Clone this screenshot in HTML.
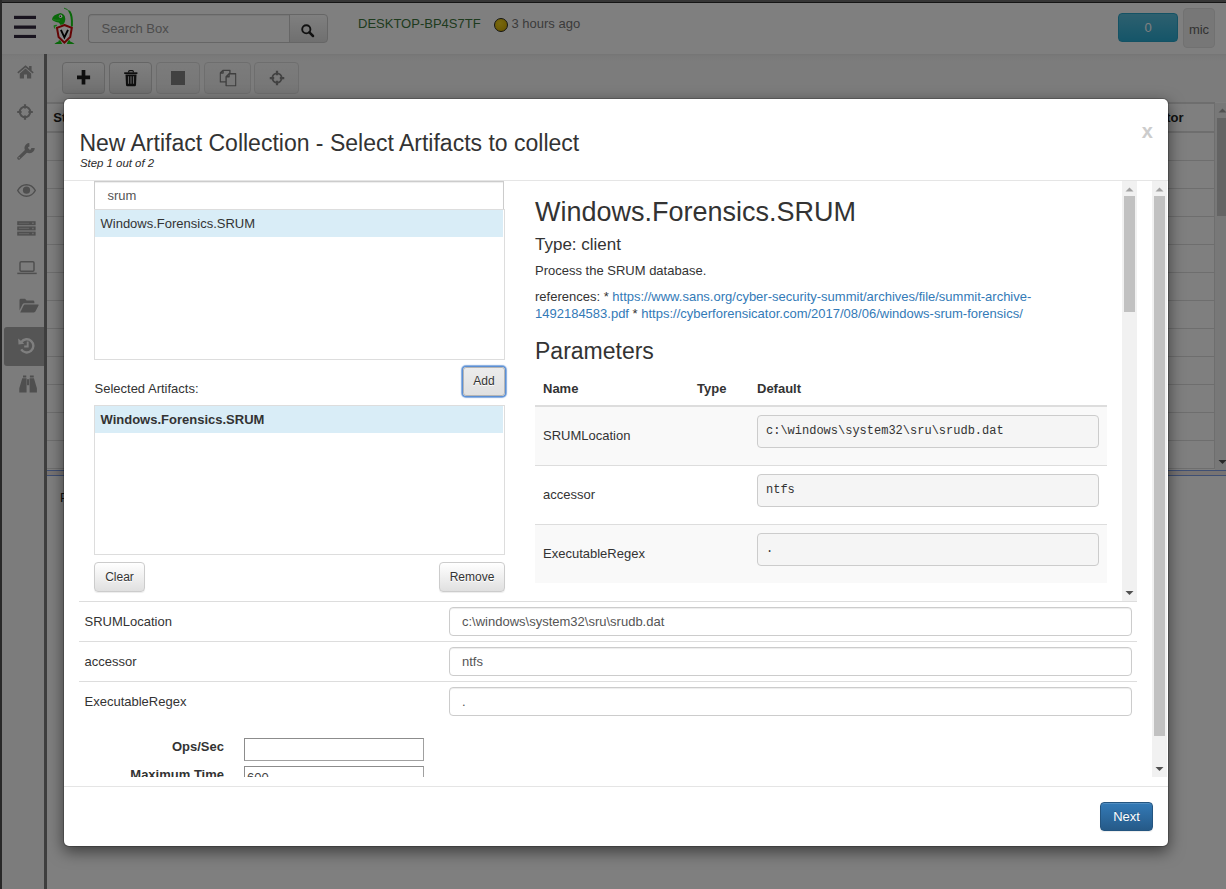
<!DOCTYPE html>
<html>
<head>
<meta charset="utf-8">
<title>Velociraptor</title>
<style>
*{box-sizing:border-box;}
html,body{margin:0;padding:0;}
body{width:1226px;height:889px;overflow:hidden;position:relative;background:#fff;font-family:"Liberation Sans",sans-serif;font-size:13px;color:#333;line-height:1.42857;}
.abs{position:absolute;}
/* ---------- background app ---------- */
#app{position:absolute;left:0;top:0;width:1226px;height:889px;background:#fff;}
#navbar{position:absolute;left:2px;top:3px;width:1224px;height:51px;background:#fff;}
.hbar{position:absolute;left:14px;width:22px;height:3.5px;background:#2b2238;border-radius:1px;}
#search{position:absolute;left:88px;top:14px;width:202px;height:29px;border:1px solid #ccc;border-right:0;border-radius:4px 0 0 4px;background:#fff;box-shadow:inset 0 1px 1px rgba(0,0,0,.075);color:#999;font-size:13px;line-height:28px;padding-left:12.5px;}
#searchbtn{position:absolute;left:289px;top:14px;width:39px;height:29px;border:1px solid #ccc;border-radius:0 4px 4px 0;background:linear-gradient(#fff,#e0e0e0);}
#host{position:absolute;left:358px;top:15px;font-size:13px;color:#3c763d;white-space:nowrap;}
#ago{position:absolute;left:511.5px;top:15px;font-size:13px;color:#777;white-space:nowrap;}
#dot{position:absolute;left:494px;top:18px;width:14px;height:14px;border-radius:50%;background:radial-gradient(circle at 40% 35%,#f2d21c,#c9a200);border:1px solid #2a2a20;}
#cnt{position:absolute;left:1118px;top:13px;width:60px;height:29px;border-radius:4px;background:linear-gradient(#5bc0de,#2aabd2);border:1px solid #28a4c9;color:#fff;text-align:center;line-height:28px;font-size:13px;}
#mic{position:absolute;left:1183px;top:8px;width:32px;height:40px;border-radius:4px;background:#eee;border:1px solid #e2e2e2;color:#666;text-align:center;line-height:41px;font-size:13px;}
#sidebar{position:absolute;left:2px;top:54px;width:42px;height:835px;background:linear-gradient(#efefef,#f5f5f5 2px,#f8f8f8 6px);}
#sidesep{position:absolute;left:44px;top:54px;width:3px;height:835px;background:#7d7d7d;}
#active{position:absolute;left:4px;top:327px;width:40px;height:38.5px;background:#aaa;border-radius:3px 0 0 3px;}
.sico{position:absolute;left:15px;width:22px;height:22px;}
#toolbar{position:absolute;left:47px;top:54px;width:1179px;height:48px;background:linear-gradient(#ebebeb,#f3f3f3 2px,#f8f8f8 7px);}
.tbtn{position:absolute;top:62px;height:32px;border:1px solid #ccc;border-radius:4px;background:linear-gradient(#fff,#e0e0e0);}
.tbtn.dis{background:linear-gradient(#f8f8f8,#ececec);border-color:#ddd;}
.tbtn svg{position:absolute;left:50%;top:50%;transform:translate(-50%,-50%);}
#tbl{position:absolute;left:47px;top:102px;width:1168px;height:368px;background:#fff;}
.trow{position:absolute;left:0;width:1168px;height:1px;background:#ddd;}
#tblsb{position:absolute;left:1215px;top:103px;width:15px;height:367px;background:#f1f1f1;}
#tblthumb{position:absolute;left:1217px;top:118px;width:11px;height:98px;background:#c8c8c8;}
#split{position:absolute;left:47px;top:470px;width:1179px;height:6px;background:#efe6e4;border-top:1px solid #7f9fe6;border-bottom:1px solid #7f9fe6;}
#backdrop{position:absolute;left:0;top:0;width:1226px;height:889px;background:rgba(0,0,0,.5);}
#frameT{position:absolute;left:0;top:0;width:1226px;height:3px;background:linear-gradient(#363636 0,#363636 2px,#151515 2px,#151515 3px);}
#frameL{position:absolute;left:0;top:0;width:2px;height:889px;background:#282828;}
/* ---------- modal ---------- */
#modal{position:absolute;left:63px;top:98px;width:1106px;height:749px;background:#fff;background-clip:padding-box;border-radius:6px;box-shadow:0 5px 15px rgba(0,0,0,.5);border:1px solid rgba(0,0,0,.2);}
#mtitle{position:absolute;left:79.4px;top:126px;font-size:23px;line-height:34px;color:#333;white-space:nowrap;}
#mstep{position:absolute;left:80px;top:155px;font-size:11.4px;line-height:16px;font-style:italic;color:#2a2a2a;white-space:nowrap;}
#mclose{position:absolute;left:1141.8px;top:117.5px;font-size:20px;font-weight:bold;color:#ccc;line-height:26px;}
.hline{position:absolute;height:1px;background:#e5e5e5;}

/* ---------- modal body ---------- */
.t{position:absolute;white-space:nowrap;margin-top:1px;line-height:18px;font-size:13px;color:#333;}
.b{font-weight:bold;}
a.l,.l{color:#337ab7;text-decoration:none;}
#srch{position:absolute;left:94px;top:181px;width:410px;height:29px;border:1px solid #ccc;background:#fff;box-shadow:inset 0 1px 1px rgba(0,0,0,.075);}
.lbox{position:absolute;left:94px;width:411px;border:1px solid #ddd;background:#fff;}
.lsel{position:absolute;left:95px;width:408px;height:27px;background:#d9edf7;}
.btn{position:absolute;height:30px;border:1px solid #ccc;border-radius:4px;background:linear-gradient(#fff,#e0e0e0);box-shadow:inset 0 1px 0 rgba(255,255,255,.15),0 1px 1px rgba(0,0,0,.075);font-size:12px;line-height:28px;text-align:center;color:#333;text-shadow:0 1px 0 #fff;}
#addbtn{left:463px;top:367px;width:42px;height:29px;line-height:26px;border-radius:3px;background:linear-gradient(#ececec,#e0e0e0);border-color:#b5b5b5;box-shadow:0 0 0 1px #5b8fd4,0 0 1px 2px rgba(91,143,212,.75);}
#nextbtn{left:1100px;top:802px;width:53px;height:29px;background:linear-gradient(#337ab7,#265a88);border-color:#245580;color:#fff;text-shadow:0 -1px 0 rgba(0,0,0,.2);font-size:13px;line-height:27px;}
.pre{position:absolute;left:757px;width:342px;height:33px;border:1px solid #ccc;border-radius:4px;background:#f5f5f5;font-family:"Liberation Mono",monospace;font-size:12px;line-height:17px;padding:7px 0 0 8px;color:#333;white-space:pre;}
.stripe{position:absolute;left:535px;width:572px;height:58px;background:#f9f9f9;}
.tl{position:absolute;left:535px;width:572px;height:1px;background:#ddd;}
.inp{position:absolute;left:449px;width:683px;height:29px;border:1px solid #ccc;border-radius:4px;background:#fff;box-shadow:inset 0 1px 1px rgba(0,0,0,.075);font-size:13px;line-height:27px;padding-left:12px;color:#555;white-space:nowrap;}
.pl{position:absolute;left:79px;width:1058px;height:1px;background:#ddd;}
.sbt{position:absolute;width:15px;background:#f1f1f1;}
.sbh{position:absolute;width:11px;background:#c1c1c1;}
.nin{position:absolute;left:244px;width:180px;height:23px;border:1px solid #a0a0a0;border-top-color:#8c8c8c;border-left-color:#8c8c8c;background:#fff;border-radius:0;}
#clip{position:absolute;left:65px;top:181px;width:1087px;height:596px;overflow:hidden;}
</style>
</head>
<body>
<div id="app">
  <div id="navbar"></div>
  <svg class="abs" style="left:14px;top:14px" width="23" height="26" viewBox="0 0 23 26"><rect x="0" y="1.8" width="22" height="3.2" fill="#33283e"/><rect x="0" y="11.5" width="22" height="3.3" fill="#33283e"/><rect x="0" y="20.9" width="22" height="3.1" fill="#33283e"/></svg>
  
  <div id="search">Search Box</div>
  <div id="searchbtn"><svg class="abs" style="left:11.3px;top:8.9px" width="15" height="15" viewBox="0 0 15 15"><circle cx="5.3" cy="5.3" r="4.1" fill="none" stroke="#222" stroke-width="1.9"/><path d="M8.4 8.4L12 12" stroke="#222" stroke-width="2.5" stroke-linecap="round"/></svg></div>
  <div id="host">DESKTOP-BP4S7TF</div>
  <div id="dot"></div>
  <div id="ago">3 hours ago</div>
  <div id="cnt">0</div>
  <div id="mic">mic</div>
  <div id="sidebar"></div>
  <div id="sidesep"></div>
  <div id="active"></div>
  
<svg class="abs" style="left:16.5px;top:64.9px" width="17" height="14" viewBox="0 0 17 14"><path d="M8.5 0.3L0.3 7.2L1.3 8.4L8.5 2.4L15.7 8.4L16.7 7.2L14.6 5.4V1H12.1V3.3Z" fill="#9e9e9e"/><path d="M8.5 3.6L2.8 8.4V13.6H7V9.6H10V13.6H14.2V8.4Z" fill="#9e9e9e"/></svg>
<svg class="abs" style="left:16.5px;top:103.5px" width="16" height="16" viewBox="0 0 16 16"><circle cx="8" cy="8" r="5.2" fill="none" stroke="#9e9e9e" stroke-width="2"/><path d="M8 0.2V4.6M8 11.4V15.8M0.2 8H4.6M11.4 8H15.8" stroke="#9e9e9e" stroke-width="2.2"/></svg>
<svg class="abs" style="left:16.5px;top:142.5px" width="18" height="17" viewBox="0 0 18 17"><path d="M1.9 15.1L10.6 6.8" stroke="#9e9e9e" stroke-width="3.3" stroke-linecap="round"/><path d="M16 5A3.4 3.4 0 1 1 12.4 1.7" fill="none" stroke="#9e9e9e" stroke-width="3.5"/><circle cx="2.2" cy="14.8" r="0.7" fill="#fff"/></svg>
<svg class="abs" style="left:16.5px;top:183.5px" width="19" height="13" viewBox="0 0 19 13"><path d="M0.7 6.5C3 2.4 6 0.8 9.5 0.8S16 2.4 18.3 6.5C16 10.6 13 12.2 9.5 12.2S3 10.6 0.7 6.5Z" fill="none" stroke="#9e9e9e" stroke-width="1.5"/><circle cx="9.5" cy="6.2" r="3.6" fill="#9e9e9e"/></svg>
<svg class="abs" style="left:16.5px;top:220.5px" width="19" height="15" viewBox="0 0 19 15"><g fill="#9e9e9e"><rect x="0.2" y="0.2" width="18.4" height="4"/><rect x="0.2" y="5.4" width="18.4" height="4"/><rect x="0.2" y="10.6" width="18.4" height="4"/></g><path d="M1.8 2.2H12.2M1.8 7.4H12.2M1.8 12.6H12.2" stroke="#c4c4c4" stroke-width="1.1"/><path d="M15 2.2H16.8M15 7.4H16.8M15 12.6H16.8" stroke="#d0d0d0" stroke-width="1.5"/></svg>
<svg class="abs" style="left:16.5px;top:260.5px" width="20" height="14" viewBox="0 0 20 14"><rect x="3" y="0.8" width="14" height="9.4" rx="1.2" fill="none" stroke="#9e9e9e" stroke-width="1.5"/><path d="M0.3 12.4H19.7" stroke="#9e9e9e" stroke-width="1.5"/></svg>
<svg class="abs" style="left:18.5px;top:297.5px" width="20" height="15" viewBox="0 0 20 15"><path d="M0.5 12.5V2.2A1.4 1.4 0 0 1 1.9 0.8H6L7.6 2.6H14A1.4 1.4 0 0 1 15.4 4V5.2H5.2Q4.2 5.2 3.6 6.3Z" fill="#9e9e9e"/><path d="M1.2 14.4L4.6 7.4Q5 6.6 5.8 6.6H19.3Q19.9 6.6 19.5 7.5L16.4 13.6Q16 14.4 15 14.4Z" fill="#9e9e9e"/></svg>
<svg class="abs" style="left:18.3px;top:336.8px" width="17" height="17" viewBox="0 0 17 17"><path d="M3.4 5A6.6 6.6 0 1 1 3.2 12.4" fill="none" stroke="#fff" stroke-width="2.4"/><path d="M0.2 1.6L0.5 7.4L6.2 6.8Z" fill="#fff"/><path d="M9.7 4.6V9.5H6.2" fill="none" stroke="#fff" stroke-width="1.9"/></svg>
<svg class="abs" style="left:18.7px;top:375.3px" width="18.2" height="18" viewBox="0 0 19 18" preserveAspectRatio="none"><path d="M3.6 2.4H7.6V0.4H4.2V2.4M11.4 2.4H15.4V0.4H14.8H11.4Z" fill="#9e9e9e"/><path d="M3.4 3.2H7.9V17.6H0.3V13.2Z M15.6 3.2H11.1V17.6H18.7V13.2Z" fill="#9e9e9e"/><rect x="8.4" y="4.2" width="2.2" height="6" fill="#9e9e9e"/></svg>

  <div id="toolbar"></div>
  
<div class="tbtn" style="left:62px;width:43px"><svg style="left:13.2px;top:7.1px;transform:none" width="14.5" height="14.5" viewBox="0 0 14.5 14.5"><path d="M7.5 0V14.5M1 7.3H14.1" stroke="#1c1c1c" stroke-width="3.7"/></svg></div>
<div class="tbtn" style="left:109px;width:43px"><svg style="left:14px;top:6.6px;transform:none" width="14" height="17" viewBox="0 0 14 17"><path d="M4.7 2.4V1.5Q4.7 0.6 5.6 0.6H8.4Q9.3 0.6 9.3 1.5V2.4" fill="none" stroke="#1c1c1c" stroke-width="1.2"/><rect x="0.2" y="2.3" width="13.2" height="1.7" fill="#1c1c1c"/><path d="M1.5 4.4H12.5L12 15Q11.9 16.2 10.7 16.2H3.3Q2.1 16.2 2 15Z" fill="#1c1c1c"/><path d="M4.5 6.2V13.8M7 6.2V13.8M9.5 6.2V13.8" stroke="#bdbdbd" stroke-width="1.1"/></svg></div>
<div class="tbtn dis" style="left:156px;width:44px"><svg width="15" height="15" viewBox="0 0 15 15"><rect x="0.5" y="0.5" width="14" height="14" fill="#828282"/></svg></div>
<div class="tbtn dis" style="left:204px;width:47px"><svg width="17" height="17" viewBox="0 0 17 17"><path d="M3.6 0.7H10.4V12.4H0.7V3.6Z M3.6 0.7V3.6H0.7" fill="none" stroke="#7e7e7e" stroke-width="1.35" stroke-linejoin="round"/><path d="M9.6 4.2H16.3V16.3H6.6V7.2Z" fill="#f0f0f0" stroke="#7e7e7e" stroke-width="1.35" stroke-linejoin="round"/><path d="M9.6 4.2V7.2H6.6" fill="none" stroke="#7e7e7e" stroke-width="1.35" stroke-linejoin="round"/></svg></div>
<div class="tbtn dis" style="left:254px;width:45px"><svg width="15" height="15" viewBox="0 0 16 16"><circle cx="8" cy="8" r="4.9" fill="none" stroke="#848484" stroke-width="2"/><path d="M8 0V5M8 11V16M0 8H5M11 8H16" stroke="#848484" stroke-width="2.4"/></svg></div>

  <div id="tbl"><div class="abs" style="left:0;top:0;width:1168px;height:2px;background:#ddd"></div><div class="abs" style="left:0;top:29px;width:1168px;height:2px;background:#ddd"></div><div class="trow" style="top:58px"></div><div class="trow" style="top:86px"></div><div class="trow" style="top:114px"></div><div class="trow" style="top:142px"></div><div class="trow" style="top:170px"></div><div class="trow" style="top:198px"></div><div class="trow" style="top:226px"></div><div class="trow" style="top:254px"></div><div class="trow" style="top:282px"></div><div class="trow" style="top:310px"></div><div class="trow" style="top:338px"></div><div class="trow" style="top:366px"></div><div class="abs" style="left:6.3px;top:7px;font-size:13px;font-weight:bold;color:#222">St</div><div class="abs" style="left:1078.5px;top:7px;font-size:13px;font-weight:bold;color:#222;width:58px;text-align:right">Creator</div><div class="abs" style="left:1167px;top:0;width:1px;height:367px;background:#ddd"></div></div>
  <div id="tblsb"></div><div id="tblthumb"></div><svg class="abs" style="left:1215px;top:102.4px" width="15" height="15"><path d="M3.5 10.5L7.5 6.5L11.5 10.5Z" fill="#a3a3a3"/></svg><svg class="abs" style="left:1215px;top:455px" width="15" height="15"><path d="M3.5 5L11.5 5L7.5 9Z" fill="#505050"/></svg>
  <div id="split"></div>
  <div class="abs" style="left:60px;top:489px;font-size:13px;line-height:18px;color:#222;white-space:nowrap">Please click a collection in the above table</div>
</div>
<div id="backdrop"></div>
<div id="frameT"></div><div id="frameL"></div>
<svg class="abs" style="left:46px;top:4px" width="36" height="46" viewBox="0 0 36 46">
<path d="M18.4 4.2Q21.6 4.8 23.8 8" fill="none" stroke="#0a680a" stroke-width="0.9" stroke-linecap="round"/>
<path d="M23.5 7.5Q26.4 11.5 25.9 21.8" fill="none" stroke="#0a680a" stroke-width="2" stroke-linecap="round"/>
<path d="M6 15.2Q6.4 12.6 8.6 11.2Q11.5 9.6 14.4 8.9Q17.4 9.4 18.7 12Q19.6 14.6 19 17.2Q18.4 19.4 17 20.6L14.2 20.8Q13.6 19.2 12.6 18.6Q10 18.2 7.8 17Q6.4 16.4 6 15.2Z" fill="#0a680a"/>
<path d="M7 15.6Q10 16.6 14 16.2" fill="none" stroke="#2f8a2f" stroke-width="0.6"/>
<circle cx="14.6" cy="12.3" r="1.7" fill="#8a8a8a"/><circle cx="14.3" cy="12.3" r="0.7" fill="#050505"/>
<path d="M7.6 21.6Q9 20.6 11.2 20.9L10.6 22.2Q9.2 22 8.9 23.2L9.6 24.6L8.6 24.8Q7.4 23.4 7.6 21.6Z" fill="#1a761a"/>
<path d="M8.4 39.9L16.2 39.9L14.4 36.4L12.8 36.2L12.6 37.6Q10 38.6 8.4 39.9Z" fill="#0a680a"/>
<path d="M20.8 39.9L28.6 39.9Q26.6 38.4 24.2 37.6L23.8 36.2L22.2 36.6Z" fill="#0a680a"/>
<path d="M18.4 21L25.8 23.8L24.2 33L18.4 38.6L12.6 33L11 23.8Z" fill="#858585" stroke="#640505" stroke-width="2" stroke-linejoin="miter"/>
<path d="M14.9 25.9L18.4 33.4L22 25.9" fill="none" stroke="#000" stroke-width="1.9"/>
</svg>
<div id="modal"></div>
<div id="mtitle">New Artifact Collection - Select Artifacts to collect</div>
<div id="mstep">Step 1 out of 2</div>
<div id="mclose">x</div>
<div class="hline" style="left:64px;top:180px;width:1104px"></div>
<div class="hline" style="left:64px;top:786px;width:1104px"></div>

<div id="srch"></div><div class="t" style="left:107.5px;top:186px;color:#555">srum</div>
<div class="lbox" style="top:209px;height:151px"></div>
<div class="lsel" style="top:210px"></div>
<div class="t" style="left:100.5px;top:214px">Windows.Forensics.SRUM</div>
<div class="t" style="left:94.5px;top:379px">Selected Artifacts:</div>
<div class="btn" id="addbtn">Add</div>
<div class="lbox" style="top:405px;height:150px"></div>
<div class="lsel" style="top:406px"></div>
<div class="t b" style="left:100.5px;top:410px">Windows.Forensics.SRUM</div>
<div class="btn" style="left:94px;top:562px;width:51px">Clear</div>
<div class="btn" style="left:439px;top:562px;width:66px">Remove</div>

<div class="t" style="left:535px;top:192px;font-size:27px;line-height:38px">Windows.Forensics.SRUM</div>
<div class="t" style="left:535px;top:232px;font-size:17px;line-height:24px">Type: client</div>
<div class="t" style="left:535px;top:261px">Process the SRUM database.</div>
<div class="t" style="left:535px;top:287px">references: * <span class="l">https://www.sans.org/cyber-security-summit/archives/file/summit-archive-</span></div>
<div class="t" style="left:535px;top:304px"><span class="l">1492184583.pdf</span> * <span class="l">https://cyberforensicator.com/2017/08/06/windows-srum-forensics/</span></div>
<div class="t" style="left:535px;top:334px;font-size:23px;line-height:32px">Parameters</div>
<div class="t b" style="left:543px;top:379px">Name</div>
<div class="t b" style="left:697px;top:379px">Type</div>
<div class="t b" style="left:757px;top:379px">Default</div>
<div class="tl" style="top:405px;height:2px"></div>
<div class="stripe" style="top:407px"></div><div class="tl" style="top:465px"></div>
<div class="tl" style="top:524px"></div><div class="stripe" style="top:525px"></div>
<div class="t" style="left:543px;top:426px">SRUMLocation</div>
<div class="t" style="left:543px;top:485px">accessor</div>
<div class="t" style="left:543px;top:544px">ExecutableRegex</div>
<div class="pre" style="top:415px">c:\windows\system32\sru\srudb.dat</div>
<div class="pre" style="top:474px">ntfs</div>
<div class="pre" style="top:533px">.</div>

<div class="pl" style="top:601px"></div><div class="pl" style="top:641px"></div><div class="pl" style="top:681px"></div>
<div class="t" style="left:84.5px;top:612px">SRUMLocation</div>
<div class="t" style="left:84.5px;top:652px">accessor</div>
<div class="t" style="left:84.5px;top:692px">ExecutableRegex</div>
<div class="inp" style="top:607px">c:\windows\system32\sru\srudb.dat</div>
<div class="inp" style="top:647px">ntfs</div>
<div class="inp" style="top:687px">.</div>
<div id="clip">
 <div class="t b" style="left:0;width:159px;text-align:right;top:556px">Ops/Sec</div>
 <div class="nin" style="left:179px;top:557px"></div>
 <div class="t b" style="left:0;width:159px;text-align:right;top:584px">Maximum Time</div>
 <div class="nin" style="left:179px;top:585px"></div>
 <div class="t" style="left:182px;top:587px;color:#444">600</div>
</div>

<div class="sbt" style="left:1122px;top:181px;height:420px"></div>
<div class="sbh" style="left:1124px;top:196px;height:116px"></div>
<svg class="abs" style="left:1122px;top:181px" width="15" height="15"><path d="M3.5 10.5L7.5 6.5L11.5 10.5Z" fill="#a3a3a3"/></svg>
<svg class="abs" style="left:1122px;top:586px" width="15" height="15"><path d="M3.5 5L11.5 5L7.5 9Z" fill="#505050"/></svg>
<div class="sbt" style="left:1152px;top:181px;height:596px"></div>
<div class="sbh" style="left:1154px;top:196px;height:540px"></div>
<svg class="abs" style="left:1152px;top:181px" width="15" height="15"><path d="M3.5 10.5L7.5 6.5L11.5 10.5Z" fill="#a3a3a3"/></svg>
<svg class="abs" style="left:1152px;top:762px" width="15" height="15"><path d="M3.5 5L11.5 5L7.5 9Z" fill="#505050"/></svg>
<div class="btn" id="nextbtn">Next</div>

</body>
</html>
